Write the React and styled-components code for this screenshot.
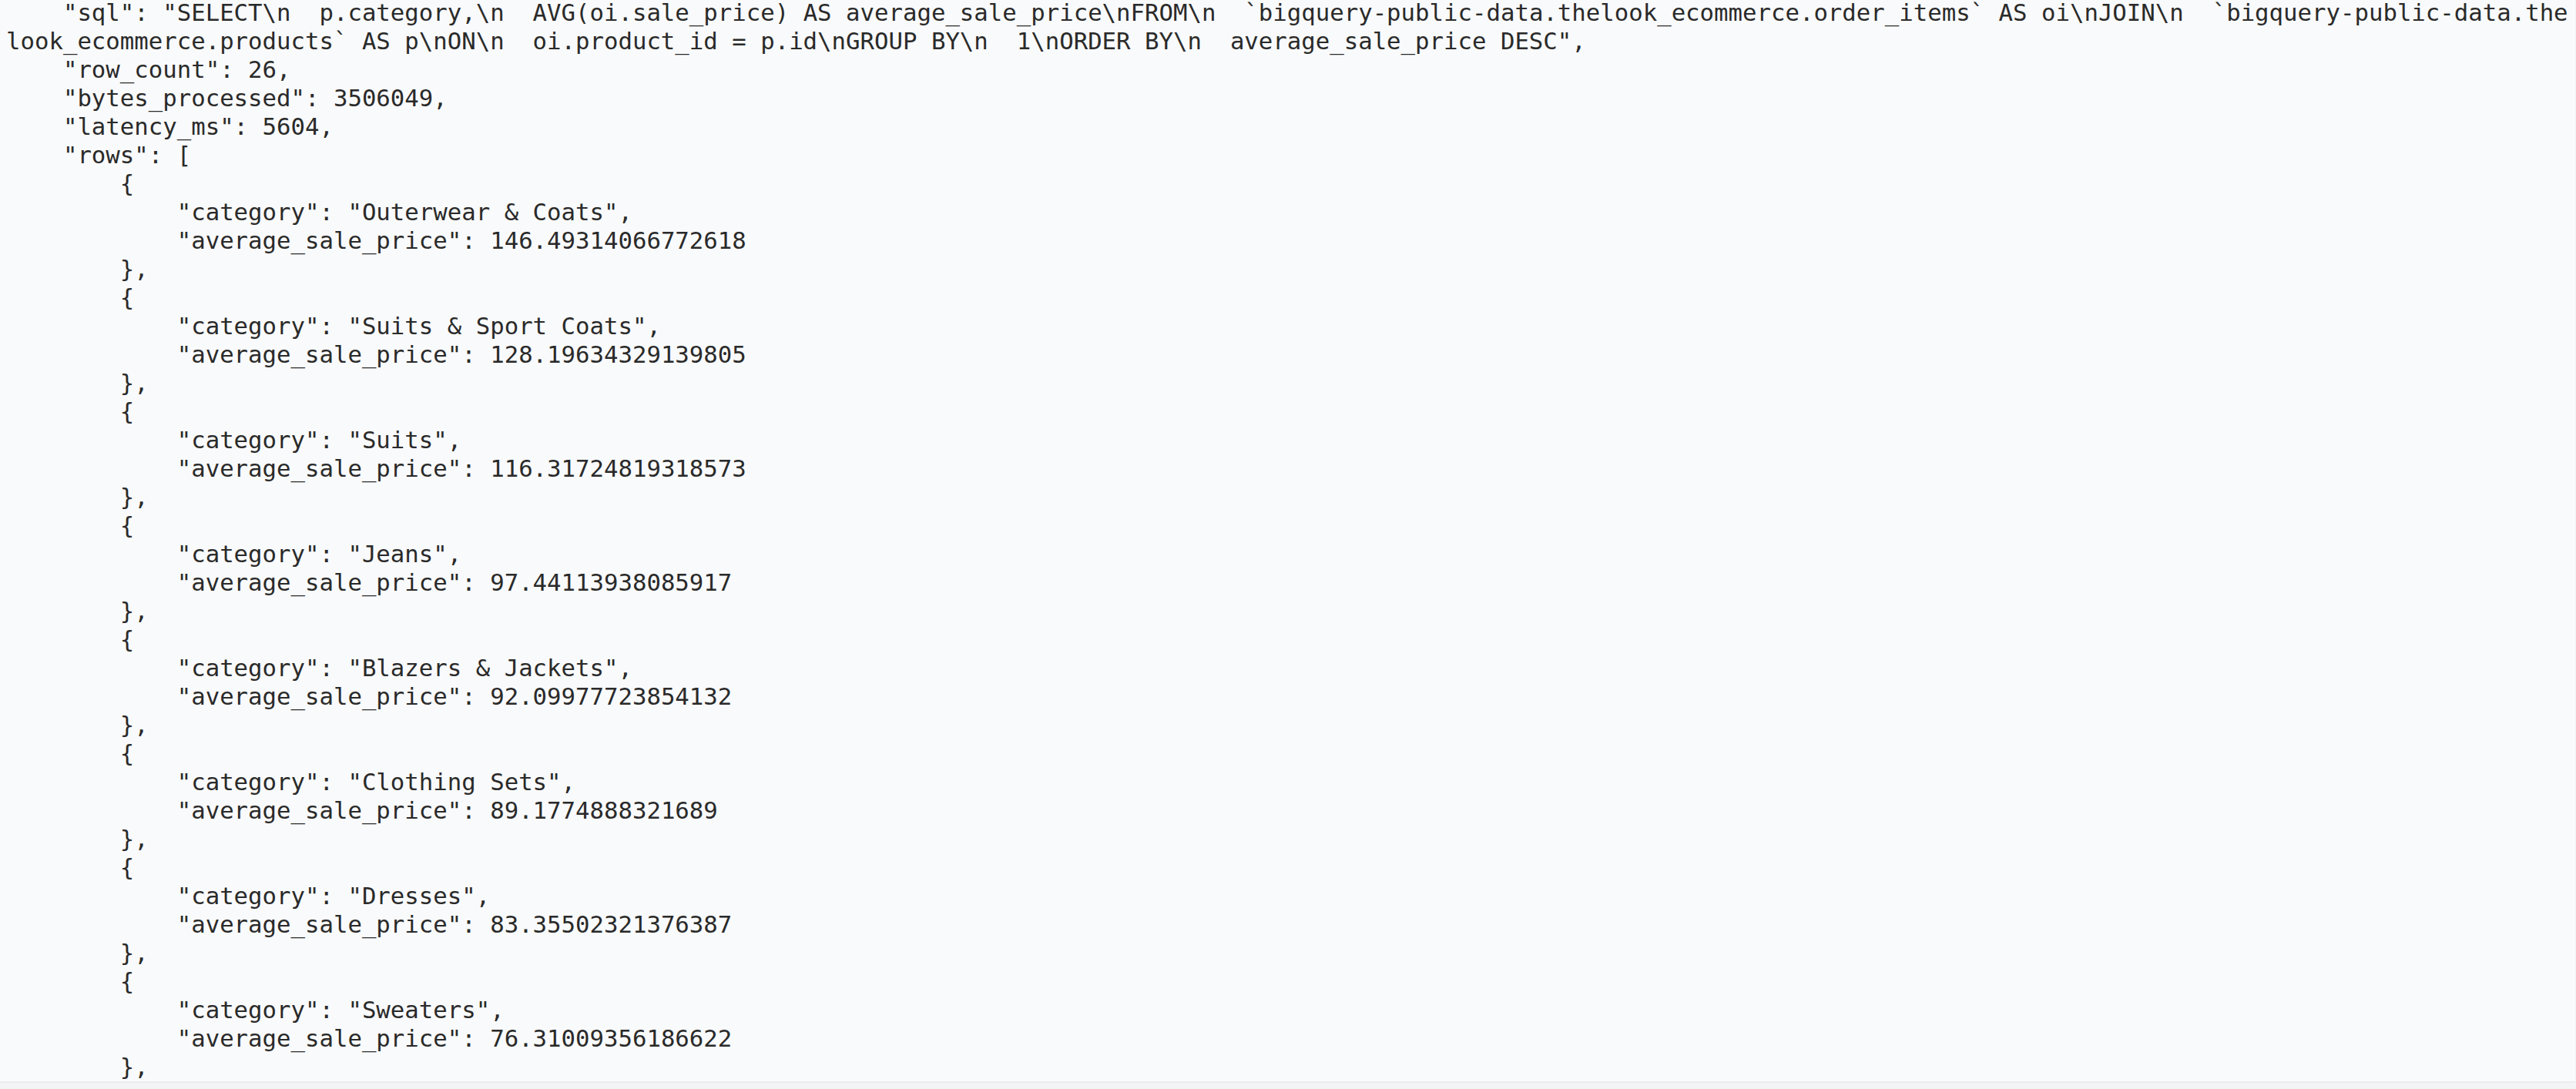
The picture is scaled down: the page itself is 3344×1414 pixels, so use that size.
import styled, { createGlobalStyle } from "styled-components";

const GlobalStyle = createGlobalStyle`
  html, body {
    margin: 0;
    padding: 0;
    background: #f3f4f6;
    overflow: hidden;
  }
`;

const rows = [
  { category: "Outerwear & Coats", price: "146.49314066772618" },
  { category: "Suits & Sport Coats", price: "128.19634329139805" },
  { category: "Suits", price: "116.31724819318573" },
  { category: "Jeans", price: "97.44113938085917" },
  { category: "Blazers & Jackets", price: "92.09977723854132" },
  { category: "Clothing Sets", price: "89.1774888321689" },
  { category: "Dresses", price: "83.35502321376387" },
  { category: "Sweaters", price: "76.31009356186622" },
];

const sql =
  "SELECT\\n  p.category,\\n  AVG(oi.sale_price) AS average_sale_price\\nFROM\\n  `bigquery-public-data.thelook_ecommerce.order_items` AS oi\\nJOIN\\n  `bigquery-public-data.thelook_ecommerce.products` AS p\\nON\\n  oi.product_id = p.id\\nGROUP BY\\n  1\\nORDER BY\\n  average_sale_price DESC";

function buildJson() {
  const lines = [];
  lines.push(`    "sql": "${sql}",`);
  lines.push(`    "row_count": 26,`);
  lines.push(`    "bytes_processed": 3506049,`);
  lines.push(`    "latency_ms": 5604,`);
  lines.push(`    "rows": [`);
  rows.forEach((r) => {
    lines.push(`        {`);
    lines.push(`            "category": "${r.category}",`);
    lines.push(`            "average_sale_price": ${r.price}`);
    lines.push(`        },`);
  });
  return lines.join("\n");
}

function App() {
  return (
    <>
      <GlobalStyle />
      <Panel>
        <Code>{buildJson()}</Code>
      </Panel>
    </>
  );
}

const Panel = styled.div`
  height: 1406px;
  overflow: hidden;
  background-color: #f9fafb;
  border-bottom: 2px solid #ebecee;
  border-right: 1px solid #f0f1f3;
  box-sizing: border-box;
`;

const Code = styled.pre`
  margin: -2px 0 0;
  padding: 0 0 0 8px;
  font-family: "DejaVu Sans Mono", "Liberation Mono", monospace;
  font-size: 30.7px;
  line-height: 37px;
  color: #2a2a2a;
  white-space: pre-wrap;
  word-break: break-all;
`;

export default App;
